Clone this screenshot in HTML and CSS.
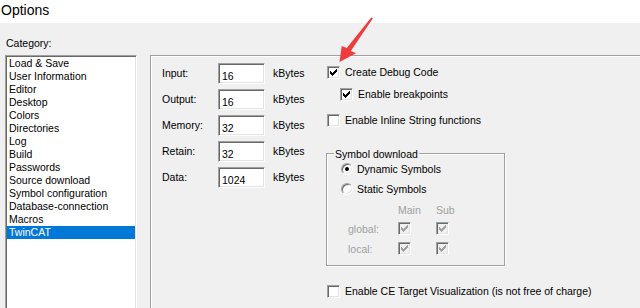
FILE: index.html
```html
<!DOCTYPE html>
<html>
<head>
<meta charset="utf-8">
<link rel="stylesheet" href="styles.css">
</head>
<body>
<div class="titlebar">Options</div>
<div class="main">
  <div class="left">
    <div class="cat-label">Category:</div>
    <div class="listbox">
      <div class="item">Load &amp; Save</div>
      <div class="item">User Information</div>
      <div class="item">Editor</div>
      <div class="item">Desktop</div>
      <div class="item">Colors</div>
      <div class="item">Directories</div>
      <div class="item">Log</div>
      <div class="item">Build</div>
      <div class="item">Passwords</div>
      <div class="item">Source download</div>
      <div class="item">Symbol configuration</div>
      <div class="item">Database-connection</div>
      <div class="item">Macros</div>
      <div class="item sel">TwinCAT</div>
    </div>
  </div>
  <div class="panel">
    <div class="fields">
      <div class="frow"><span class="flabel">Input:</span><span class="fbox">16</span><span class="unit">kBytes</span></div>
      <div class="frow"><span class="flabel">Output:</span><span class="fbox">16</span><span class="unit">kBytes</span></div>
      <div class="frow"><span class="flabel">Memory:</span><span class="fbox">32</span><span class="unit">kBytes</span></div>
      <div class="frow"><span class="flabel">Retain:</span><span class="fbox">32</span><span class="unit">kBytes</span></div>
      <div class="frow"><span class="flabel">Data:</span><span class="fbox">1024</span><span class="unit">kBytes</span></div>
    </div>
    <div class="opts">
      <div class="cbrow">
        <span class="cb"><svg class="tick" width="13" height="13" viewBox="0 0 13 13" shape-rendering="crispEdges"><path d="M3 5h1v3h-1zM4 6h1v3h-1zM5 7h1v3h-1zM6 6h1v3h-1zM7 5h1v3h-1zM8 4h1v3h-1zM9 3h1v3h-1z"/></svg></span>
        <span>Create Debug Code</span>
      </div>
      <div class="cbrow r2">
        <span class="cb"><svg class="tick" width="13" height="13" viewBox="0 0 13 13" shape-rendering="crispEdges"><path d="M3 5h1v3h-1zM4 6h1v3h-1zM5 7h1v3h-1zM6 6h1v3h-1zM7 5h1v3h-1zM8 4h1v3h-1zM9 3h1v3h-1z"/></svg></span>
        <span>Enable breakpoints</span>
      </div>
      <div class="cbrow r3">
        <span class="cb"></span>
        <span>Enable Inline String functions</span>
      </div>
      <div class="group">
        <span class="legend">Symbol download</span>
        <div class="rrow rr1"><span class="radio on"></span><span>Dynamic Symbols</span></div>
        <div class="rrow rr2"><span class="radio"></span><span>Static Symbols</span></div>
        <div class="srow shead"><span class="slabel"></span><span class="scol">Main</span><span class="scol">Sub</span></div>
        <div class="srow sg"><span class="slabel">global:</span>
          <span class="scol"><span class="cb dis"><svg class="tick" width="13" height="13" viewBox="0 0 13 13" shape-rendering="crispEdges"><path d="M3 5h1v3h-1zM4 6h1v3h-1zM5 7h1v3h-1zM6 6h1v3h-1zM7 5h1v3h-1zM8 4h1v3h-1zM9 3h1v3h-1z"/></svg></span></span>
          <span class="scol"><span class="cb dis"><svg class="tick" width="13" height="13" viewBox="0 0 13 13" shape-rendering="crispEdges"><path d="M3 5h1v3h-1zM4 6h1v3h-1zM5 7h1v3h-1zM6 6h1v3h-1zM7 5h1v3h-1zM8 4h1v3h-1zM9 3h1v3h-1z"/></svg></span></span>
        </div>
        <div class="srow sl"><span class="slabel">local:</span>
          <span class="scol"><span class="cb dis"><svg class="tick" width="13" height="13" viewBox="0 0 13 13" shape-rendering="crispEdges"><path d="M3 5h1v3h-1zM4 6h1v3h-1zM5 7h1v3h-1zM6 6h1v3h-1zM7 5h1v3h-1zM8 4h1v3h-1zM9 3h1v3h-1z"/></svg></span></span>
          <span class="scol"><span class="cb dis"><svg class="tick" width="13" height="13" viewBox="0 0 13 13" shape-rendering="crispEdges"><path d="M3 5h1v3h-1zM4 6h1v3h-1zM5 7h1v3h-1zM6 6h1v3h-1zM7 5h1v3h-1zM8 4h1v3h-1zM9 3h1v3h-1z"/></svg></span></span>
        </div>
      </div>
      <div class="cbrow r4">
        <span class="cb"></span>
        <span>Enable CE Target Visualization (is not free of charge)</span>
      </div>
    </div>
  </div>
</div>
<svg class="arrow" width="640" height="308" viewBox="0 0 640 308">
  <polygon points="339.5,62 341.7,46 346.8,48.1 371.2,17.4 372.8,18.6 350.8,51.1 356,53.3" fill="#ef3b3b"/>
</svg>
</body>
</html>
```

FILE: styles.css
```css
html, body { margin: 0; padding: 0; }
body {
  width: 640px;
  height: 308px;
  overflow: hidden;
  position: relative;
  background: #f0f0f0;
  font-family: "Liberation Sans", Arial, sans-serif;
  font-size: 10.5px;
  line-height: 13px;
  color: #000;
}
.titlebar {
  height: 23px;
  background: #fff;
  font-size: 14px;
  line-height: 20px;
  padding-left: 1px;
  box-sizing: border-box;
}
.main {
  display: flex;
  height: 285px;
  overflow: hidden;
}
.left {
  padding-left: 5px;
  width: 132px;
  flex: none;
}
.cat-label {
  padding: 14px 0 0 1px;
  height: 13px;
  margin-bottom: 5px;
}
.listbox {
  height: 253px;
  box-sizing: border-box;
  border: 1px solid;
  border-bottom: 0;
  border-color: #a0a0a0 #fff #fff #a0a0a0;
  box-shadow: inset 1px 1px #696969, inset -1px 0 #e3e3e3;
  background: #fff;
  padding: 1px;
}
.item {
  height: 13px;
  padding-left: 2px;
  white-space: nowrap;
}
.item.sel {
  background: #0078d7;
  color: #fff;
}
.panel {
  flex: 1;
  margin: 32px 0 0 13px;
  border-top: 1px solid #a0a0a0;
  border-left: 1px solid #a0a0a0;
  box-shadow: inset 1px 1px #fff;
  display: flex;
  padding: 7px 0 0 11px;
}
.fields {
  width: 165px;
  flex: none;
  display: flex;
  flex-direction: column;
  gap: 5px;
}
.frow {
  display: flex;
  height: 21px;
}
.flabel {
  width: 56px;
  padding-top: 4px;
}
.fbox {
  width: 47px;
  height: 21px;
  box-sizing: border-box;
  border: 1px solid;
  border-color: #a0a0a0 #fff #fff #a0a0a0;
  box-shadow: inset 1px 1px #696969, inset -1px -1px #e3e3e3;
  background: #fff;
  padding: 6px 0 0 3px;
}
.unit {
  margin-left: 8px;
  padding-top: 4px;
}
.opts {
  display: flex;
  flex-direction: column;
  padding-top: 3px;
}
.cbrow {
  display: flex;
  align-items: flex-start;
  height: 13px;
  white-space: nowrap;
}
.cbrow.r2 { margin: 9px 0 0 13px; }
.cbrow.r3 { margin-top: 13px; }
.cbrow.r4 { margin-top: 19px; }
.cb {
  width: 13px;
  height: 13px;
  flex: none;
  box-sizing: border-box;
  border: 1px solid;
  border-color: #a0a0a0 #fff #fff #a0a0a0;
  box-shadow: inset 1px 1px #696969, inset -1px -1px #e3e3e3;
  background: #fff;
  margin-right: 5px;
  position: relative;
  display: block;
}
.tick {
  position: absolute;
  left: -1px;
  top: -1px;
  fill: #000;
}
.cb.dis {
  background: #f0f0f0;
  margin-right: 0;
}
.cb.dis .tick { fill: #a0a0a0; }
.group {
  margin: 26px 0 0 -1px;
  width: 179px;
  height: 113px;
  box-sizing: border-box;
  border: 1px solid #a0a0a0;
  box-shadow: inset 1px 1px #fff, 1px 1px #fff;
  display: flex;
  flex-direction: column;
}
.legend {
  align-self: flex-start;
  margin: -6px 0 0 7px;
  padding: 0 1px;
  background: #f0f0f0;
  height: 13px;
}
.rrow {
  display: flex;
  align-items: flex-start;
  height: 13px;
  margin-left: 14px;
}
.rr1 { margin-top: 2px; }
.rr2 { margin-top: 7px; }
.radio {
  width: 12px;
  height: 12px;
  flex: none;
  box-sizing: border-box;
  border-radius: 50%;
  border: 1px solid;
  border-color: #a0a0a0 #fff #fff #a0a0a0;
  box-shadow: inset 1px 1px #696969, inset -1px -1px #e3e3e3;
  background: #fff;
  margin-right: 4px;
  position: relative;
}
.radio.on::after {
  content: "";
  position: absolute;
  left: 3px;
  top: 3px;
  width: 4px;
  height: 4px;
  border-radius: 50%;
  background: #000;
}
.srow {
  display: flex;
  margin-left: 21px;
  height: 13px;
  color: #a0a0a0;
}
.shead { margin-top: 8px; }
.sg { margin-top: 5px; }
.sl { margin-top: 7px; }
.slabel { width: 50px; padding-top: 1px; }
.scol { width: 38px; }
.arrow {
  position: absolute;
  left: 0;
  top: 0;
  pointer-events: none;
}
```
